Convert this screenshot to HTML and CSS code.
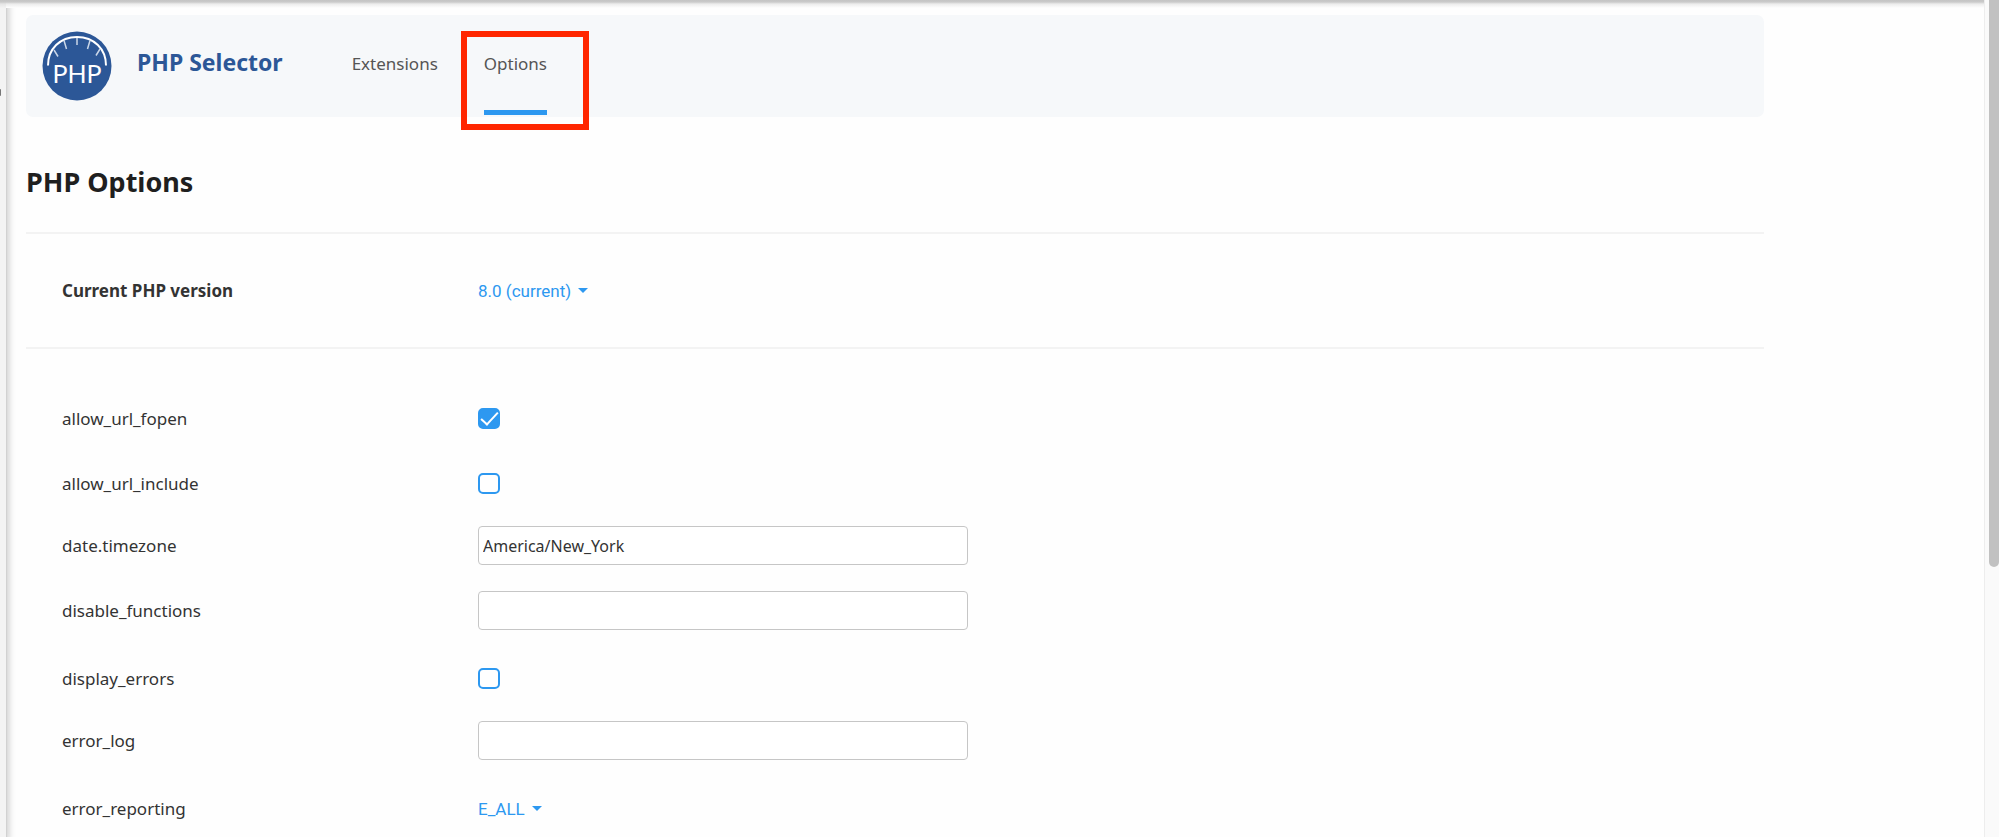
FILE: index.html
```html
<!DOCTYPE html>
<html lang="en">
<head>
<meta charset="utf-8">
<title>PHP Selector</title>
<link rel="stylesheet" href="styles.css">
</head>
<body>
<div class="page">
  <div class="sidebar-edge"><span class="sidebar-mark"></span></div>
  <main class="content">
    <header class="app-header">
      <svg class="logo" viewBox="0 0 70 70" aria-hidden="true">
        <circle cx="35" cy="35" r="34.5" fill="#2c5797"/>
        <path d="M6 34.5C6 18 18 6 35 6s29 12 29 28.500" fill="none" stroke="#fff" stroke-width="2"/>
        <path d="M35 7v7M22 9.500l2.500 8.500M48 9.500L45.500 18M12 19l4 6.500M58 18l-4 6.500" fill="none" stroke="#c9d6e8" stroke-width="1.500"/>
        <text class="logo-text" x="35" y="52" text-anchor="middle">PHP</text>
      </svg>
      <span class="app-name">PHP Selector</span>
      <nav class="tabs">
        <a class="tab" href="#extensions">Extensions</a>
        <a class="tab tab-active" href="#options">Options<span class="highlight"></span></a>
      </nav>
    </header>
    <h1 class="title">PHP Options</h1>
    <form>
      <div class="row version-row">
        <label class="label label-strong" for="version">Current PHP version</label>
        <span class="picker"><select id="version" class="select"><option>8.0 (current)</option></select><svg class="caret" viewBox="0 0 10 5" aria-hidden="true"><path d="M0 0h10L5 5z"/></svg></span>
      </div>
      <div class="options">
        <div class="row"><label class="label" for="fopen">allow_url_fopen</label><input id="fopen" class="check" type="checkbox" checked></div>
        <div class="row"><label class="label" for="include">allow_url_include</label><input id="include" class="check" type="checkbox"></div>
        <div class="row row-text"><label class="label" for="timezone">date.timezone</label><input id="timezone" class="field" type="text" value="America/New_York"></div>
        <div class="row row-text"><label class="label" for="disable">disable_functions</label><input id="disable" class="field" type="text"></div>
        <div class="row"><label class="label" for="display">display_errors</label><input id="display" class="check" type="checkbox"></div>
        <div class="row row-text"><label class="label" for="log">error_log</label><input id="log" class="field" type="text"></div>
        <div class="row"><label class="label" for="reporting">error_reporting</label><span class="picker"><select id="reporting" class="select"><option>E_ALL</option></select><svg class="caret" viewBox="0 0 10 5" aria-hidden="true"><path d="M0 0h10L5 5z"/></svg></span></div>
      </div>
    </form>
  </main>
  <div class="scrollbar"><div class="thumb"></div></div>
</div>
</body>
</html>
```
FILE: styles.css
```css
* { box-sizing: border-box; }
body {
  margin: 0;
  background: #fefefe;
  color: #333;
  font-family: "Noto Sans", sans-serif;
  font-size: 17px;
}
.page { display: flex; min-height: 100vh; }
.sidebar-edge {
  flex: none;
  width: 6px;
  padding-top: 89px;
  background: linear-gradient(#c4c4c4, #cacaca 2px, #e6e6e6 4px, #f4f4f4 8px);
  box-shadow: 1px 0 1px #d2d2d2, 3px 0 6px #ccc;
}
.sidebar-mark {
  display: block;
  width: 1px;
  height: 7px;
  border-radius: 0 1px 1px 0;
  background: #777;
}
.content {
  flex: 1;
  padding: 15px 220px 0 20px;
  background: linear-gradient(#c4c4c4, #cacaca 2px, #ececec 4px, #fefefe 8px, transparent 8px);
}
.app-header {
  display: flex;
  height: 102px;
  padding-left: 16px;
  border-radius: 7px;
  background: #f6f8fa;
}
.logo { width: 70px; height: 70px; margin-top: 16px; }
.logo-text {
  fill: #fff;
  font-family: Lato, sans-serif;
  font-size: 25px;
}
.app-name {
  margin: 29px 69px 0 25px;
  color: #2c5797;
  font-size: 23px;
  font-weight: 700;
  line-height: 36px;
}
.tabs { display: flex; gap: 46px; padding-bottom: 2px; }
.tab {
  position: relative;
  padding-top: 37px;
  border-bottom: 5px solid transparent;
  color: #555;
  font-size: 17px;
  line-height: 24px;
  text-decoration: none;
}
.tab-active { border-color: #2d98f0; }
.highlight {
  position: absolute;
  inset: 16px -42px -20px -23px;
  border: 6px solid #ff2600;
}
.title {
  margin: 0;
  padding: 44px 0 29px;
  border-bottom: 2px solid #f3f3f3;
  color: #1f1f1f;
  font-size: 27px;
  line-height: 42px;
}
.row {
  display: grid;
  grid-template-columns: 416px minmax(0, 490px);
  align-items: center;
  height: 65px;
  padding-left: 36px;
}
.row-text { padding-bottom: 6px; }
.version-row { height: 115px; border-bottom: 2px solid #f3f3f3; }
.options { padding-top: 37px; }
.label { line-height: 24px; }
.label-strong { font-weight: 700; }
.picker { display: flex; align-items: center; gap: 7px; }
.select {
  appearance: none;
  field-sizing: content;
  padding: 0;
  border: 0;
  background: transparent;
  color: #2d98f0;
  font: 17px/24px Roboto, sans-serif;
}
.caret { width: 10px; height: 5px; fill: #2d98f0; }
.check {
  display: grid;
  place-items: center;
  appearance: none;
  width: 22px;
  height: 21px;
  margin: 0;
  border: 2px solid #2d98f0;
  border-radius: 5px;
  background: #fff;
}
.check:checked { background: #2d98f0; }
.check:checked::after {
  content: "";
  width: 15px;
  height: 7px;
  margin-bottom: 4px;
  border: solid #fff;
  border-width: 0 0 2px 2px;
  transform: rotate(-47deg);
}
.field {
  width: 100%;
  height: 39px;
  padding: 0 4px;
  border: 1px solid #c6c6c6;
  border-radius: 4px;
  background: #fff;
  color: #333;
  font: 16px "Noto Sans", sans-serif;
}
.scrollbar {
  flex: none;
  width: 15px;
  padding-left: 4px;
  border-left: 1px solid #ededed;
  background: #fafafa;
}
.thumb { height: 567px; border-radius: 0 0 5px 5px; background: #c1c1c1; }
```
